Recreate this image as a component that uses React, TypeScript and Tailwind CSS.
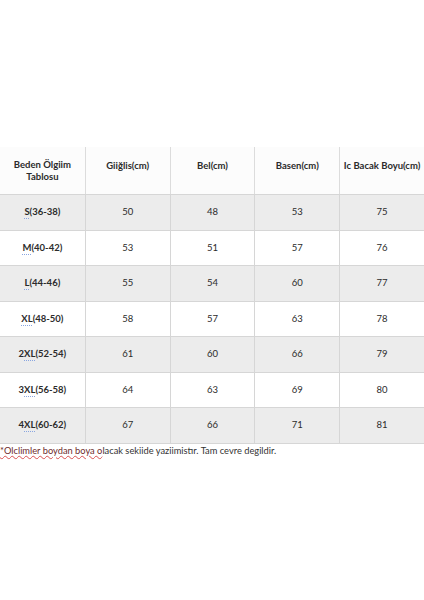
const headers = ["Giiğlis(cm)", "Bel(cm)", "Basen(cm)", "Ic Bacak Boyu(cm)"];

const rows: { size: string; range: string; values: number[] }[] = [
  { size: "S", range: "(36-38)", values: [50, 48, 53, 75] },
  { size: "M", range: "(40-42)", values: [53, 51, 57, 76] },
  { size: "L", range: "(44-46)", values: [55, 54, 60, 77] },
  { size: "XL", range: "(48-50)", values: [58, 57, 63, 78] },
  { size: "2XL", range: "(52-54)", values: [61, 60, 66, 79] },
  { size: "3XL", range: "(56-58)", values: [64, 63, 69, 80] },
  { size: "4XL", range: "(60-62)", values: [67, 66, 71, 81] },
];

function SizeLabel({ size, range }: { size: string; range: string }) {
  const lead = size.match(/^\d/) ? size[0] : "";
  const rest = lead ? size.slice(1) : size;
  return (
    <span>
      {lead}
      <span className="underline decoration-dotted decoration-[#8aa6e0] decoration-1 underline-offset-[3px]">{rest}</span>
      {range}
    </span>
  );
}

export default function App() {
  return (
    <div className="min-h-[600px] w-[424px] bg-white text-[#2b2b2b] font-['Lato','Open_Sans',sans-serif]">
      <div className="h-[147px]" />
      <div className="border-b border-[#d6d6d6]">
        {/* header */}
        <div className="grid h-[47px] grid-cols-5 bg-[#fcfcfc] text-[9.5px] font-bold">
          <div className="flex justify-center pt-[12px] text-center leading-[12px]">
            Beden Ölgiim
            <br />
            Tablosu
          </div>
          {headers.map((h) => (
            <div key={h} className="flex justify-center border-l border-[#dcdcdc] pt-[13px] leading-[12px]">
              {h}
            </div>
          ))}
        </div>
        {rows.map((r, i) => (
          <div
            key={r.size}
            className={`grid h-[35.5px] grid-cols-5 border-t border-[#d6d6d6] text-[9.5px] ${i % 2 === 0 ? "bg-[#ececec]" : "bg-white"}`}
          >
            <div className="flex items-center justify-center font-bold">
              <SizeLabel size={r.size} range={r.range} />
            </div>
            {r.values.map((v, j) => (
              <div key={j} className="flex items-center justify-center border-l border-[#d6d6d6]">
                {v}
              </div>
            ))}
          </div>
        ))}
      </div>
      <div className="pt-[1px] text-[9.3px] leading-[11px] whitespace-nowrap text-[#333]">
        <span className="text-[#6e2b2b] underline decoration-wavy decoration-[#d85050] decoration-1 underline-offset-1">*Olclimler boydan boya o</span>
        lacak sekiide yaziimistır. Tam cevre degildir.
      </div>
    </div>
  );
}
